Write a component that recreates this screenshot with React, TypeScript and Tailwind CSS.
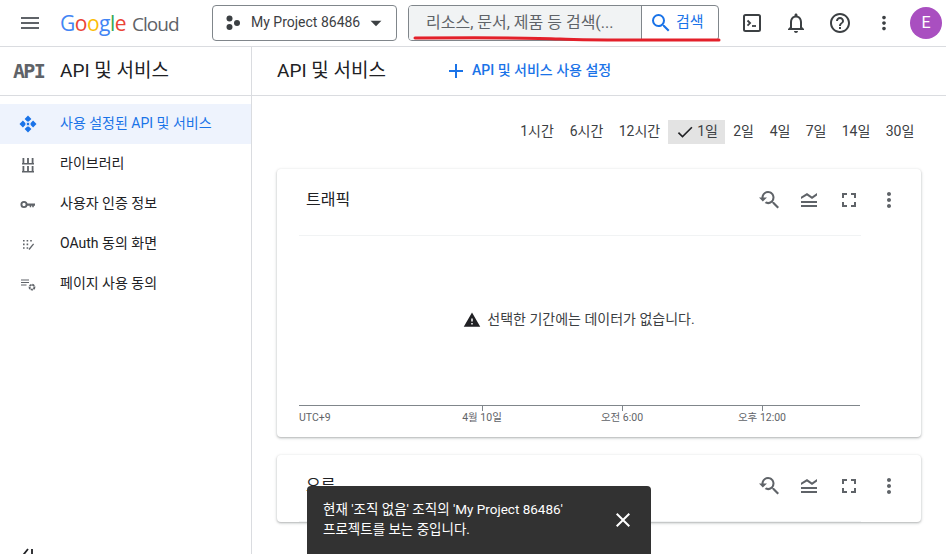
import React from 'react';
import {
  MdMenu,
  MdArrowDropDown,
  MdSearch,
  MdOutlineNotifications,
  MdHelpOutline,
  MdMoreVert,
  MdAdd,
  MdCheck,
  MdClose,
  MdWarning,
  MdFullscreen,
  MdLegendToggle,
  MdYoutubeSearchedFor,
} from 'react-icons/md';

const FONT = "font-['Roboto','Noto_Sans_CJK_KR',sans-serif]";

const ApiDiamonds = () => (
  <svg width="20" height="20" viewBox="0 0 20 20" fill="#1a73e8">
    <path d="M10 1.5l3.4 3.4-3.4 3.4-3.4-3.4zM10 11.7l3.4 3.4-3.4 3.4-3.4-3.4zM4.9 6.6l3.4 3.4-3.4 3.4L1.5 10zM15.1 6.6l3.4 3.4-3.4 3.4-3.4-3.4z" />
    <circle cx="10" cy="10" r="2.6" fill="#dbe6fb" />
    <circle cx="10" cy="10" r="1.2" />
  </svg>
);

const LibraryIcon = () => (
  <svg width="20" height="20" viewBox="0 0 20 20" fill="#5f6368">
    <path d="M4.5 4h1.8v5H4.5zM9.1 4h1.8v5H9.1zM13.7 4h1.8v5h-1.8zM4 9h12v1.4H4zM4.5 12h1.8v5H4.5zM9.1 12h1.8v5H9.1zM13.7 12h1.8v5h-1.8zM4 17h12v1.4H4z" />
  </svg>
);

const KeyIcon = () => (
  <svg width="20" height="20" viewBox="0 0 20 20" fill="#5f6368">
    <circle cx="6" cy="10.5" r="2.6" fill="none" stroke="#5f6368" strokeWidth="1.9" />
    <path d="M8.5 9.5H17v2.2h-1.2v1.6h-1.6v-1.6h-1v1.6h-1.5v-1.6H8.5z" />
  </svg>
);

const ConsentIcon = () => (
  <svg width="20" height="20" viewBox="0 0 20 20" fill="#5f6368">
    <path d="M5 6h1.6v1.6H5zM8.6 6h1.6v1.6H8.6zM12.2 6h1.6v1.6h-1.6zM5 9.6h1.6v1.6H5zM8.6 9.6h1.6v1.6H8.6zM5 13.2h1.6v1.6H5zM8.6 13.2h1.6v1.6H8.6z" />
    <path d="M11 15.5l4.6-5.6" stroke="#5f6368" strokeWidth="1.3" />
  </svg>
);

const PageUsageIcon = () => (
  <svg width="20" height="20" viewBox="0 0 20 20" fill="#5f6368">
    <path d="M3 5.5h8v1.1H3zM3 8h8v1.1H3zM3 10.5h5.5v1.1H3z" />
    <circle cx="14" cy="13.2" r="2.4" fill="none" stroke="#5f6368" strokeWidth="1.9" strokeDasharray="2 0.6" />
  </svg>
);

const TerminalIcon = () => (
  <svg width="20" height="20" viewBox="0 0 20 20" fill="none">
    <rect x="2" y="2" width="16" height="16" rx="1.5" stroke="#3c4043" strokeWidth="2" />
    <path d="M5.5 7.5l2.6 2.6-2.6 2.6" stroke="#3c4043" strokeWidth="1.8" />
    <path d="M10 13h4" stroke="#3c4043" strokeWidth="1.8" />
  </svg>
);

const ProjectIcon = () => (
  <svg width="16" height="16" viewBox="0 0 16 16" fill="#3c4043">
    <circle cx="4.5" cy="3.5" r="3" />
    <circle cx="4.5" cy="12" r="3" />
    <circle cx="12" cy="8" r="3" />
  </svg>
);

const sideItems = [
  { label: '사용 설정된 API 및 서비스', icon: <ApiDiamonds />, active: true },
  { label: '라이브러리', icon: <LibraryIcon />, active: false },
  { label: '사용자 인증 정보', icon: <KeyIcon />, active: false },
  { label: 'OAuth 동의 화면', icon: <ConsentIcon />, active: false },
  { label: '페이지 사용 동의', icon: <PageUsageIcon />, active: false },
];

const ranges = [
  { label: '1시간', w: 'w-[50px]' },
  { label: '6시간', w: 'w-[49px]' },
  { label: '12시간', w: 'w-[57px]' },
  { label: '1일', w: 'w-[57px]', active: true },
  { label: '2일', w: 'w-[37px]' },
  { label: '4일', w: 'w-[36px]' },
  { label: '7일', w: 'w-[36px]' },
  { label: '14일', w: 'w-[44px]' },
  { label: '30일', w: 'w-[44px]' },
];

const CardTools = () => (
  <div className="flex items-center text-[#5f6368]">
    <div className="w-10 flex justify-center"><MdYoutubeSearchedFor size={24} /></div>
    <div className="w-10 flex justify-center"><MdLegendToggle size={24} /></div>
    <div className="w-10 flex justify-center"><MdFullscreen size={24} /></div>
    <div className="w-10 flex justify-center"><MdMoreVert size={24} /></div>
  </div>
);

const Card = ({ title, children }: { title: string; children?: React.ReactNode }) => (
  <section className="w-[644px] bg-white rounded shadow-[0_1px_2px_rgba(60,64,67,0.3),0_1px_3px_1px_rgba(60,64,67,0.1)] shrink-0">
    <div className="h-[66px] flex items-center justify-between pl-[29px] pr-[12px] pb-[4px]">
      <h2 className="text-[16px] text-[#202124]">{title}</h2>
      <CardTools />
    </div>
    <div className="mx-[22px] w-[562px] border-t border-[#f1f3f4]" />
    {children}
  </section>
);

export default function App() {
  return (
    <div className={`w-[946px] h-[554px] overflow-hidden bg-white relative flex flex-col ${FONT} text-[#202124]`}>
      {/* Top bar */}
      <header className="h-[47px] shrink-0 flex items-center border-b border-[#dadce0]">
        <div className="w-[60px] flex justify-center"><MdMenu size={24} color="#5f6368" /></div>
        <div className="w-[152px] flex items-baseline font-['Open_Sans',sans-serif] leading-none whitespace-nowrap">
          <span className="text-[21px] tracking-[-0.5px]">
            <span className="text-[#4285f4]">G</span>
            <span className="text-[#ea4335]">o</span>
            <span className="text-[#fbbc04]">o</span>
            <span className="text-[#4285f4]">g</span>
            <span className="text-[#34a853]">l</span>
            <span className="text-[#ea4335]">e</span>
          </span>
          <span className="ml-[6px] text-[19px] tracking-[-1px] text-[#5f6368]">Cloud</span>
        </div>
        <div className="w-[185px] h-[36px] mb-[1px] border border-[#80868b] rounded flex items-center pl-[12px] pr-[7px]">
          <ProjectIcon />
          <span className="ml-[10px] text-[14px] text-[#3c4043] whitespace-nowrap">My Project 86486</span>
          <MdArrowDropDown size={26} className="ml-auto text-[#3c4043]" />
        </div>
        <div className="ml-[11px] w-[311px] h-[36px] mb-[1px] border border-[#80868b] rounded flex overflow-hidden">
          <div className="w-[233px] bg-[#f1f3f4] flex items-center pl-[17px] text-[16px] text-[#5f6368] whitespace-nowrap border-r border-[#80868b]">
            리소스, 문서, 제품 등 검색(...
          </div>
          <div className="flex-1 flex items-center pl-[7px] text-[#1a73e8] text-[15px] gap-[3px]">
            <MdSearch size={24} />
            <span>검색</span>
          </div>
        </div>
        <div className="ml-[13px] flex items-center text-[#3c4043]">
          <div className="w-10 flex justify-center"><TerminalIcon /></div>
          <div className="w-[47px] flex justify-center"><MdOutlineNotifications size={24} /></div>
          <div className="w-[41px] flex justify-center"><MdHelpOutline size={24} /></div>
          <div className="w-[48px] flex justify-center"><MdMoreVert size={22} /></div>
        </div>
        <div className="ml-[2px] w-[32px] h-[32px] rounded-full bg-[#a94fc0] text-white flex items-center justify-center text-[16px]">E</div>
      </header>

      <div className="flex flex-1 min-h-0">
        {/* Sidebar */}
        <aside className="w-[252px] shrink-0 border-r border-[#dadce0] flex flex-col relative">
          <div className="h-[49px] flex items-center pl-[13px] shrink-0 border-b border-[#dadce0]">
            <span className="w-[47px] text-[20px] font-bold text-[#5f6368] font-['DejaVu_Sans_Mono',monospace] tracking-[-1.7px]">API</span>
            <span className="text-[19px] text-[#202124]">API 및 서비스</span>
          </div>
          <nav className="mt-[8px]">
            {sideItems.map((item) => (
              <div
                key={item.label}
                className={`h-[40px] flex items-center pl-[18px] text-[14px] whitespace-nowrap ${
                  item.active ? 'bg-[#eef3fd] text-[#1a73e8]' : 'text-[#202124]'
                }`}
              >
                <span className="w-[42px]">{item.icon}</span>
                <span className="-mt-[1px]">{item.label}</span>
              </div>
            ))}
          </nav>
          <div className="mt-auto pl-[22px] h-[6px] overflow-visible text-[#202124]">
            <svg width="14" height="14" viewBox="0 0 14 14" fill="none" stroke="#202124" strokeWidth="1.8">
              <path d="M6 1L2 6l4 5M10 1v10" />
            </svg>
          </div>
        </aside>

        {/* Main */}
        <main className="flex-1 min-w-0 flex flex-col">
          <div className="h-[49px] shrink-0 flex items-center border-b border-[#dadce0] pl-[25px]">
            <h1 className="text-[19px] text-[#202124] w-[167px]">API 및 서비스</h1>
            <MdAdd size={24} color="#1a73e8" />
            <span className="ml-[4px] -mt-[1px] text-[14px] font-medium text-[#1a73e8]">API 및 서비스 사용 설정</span>
          </div>
          <div className="pl-[25px] flex flex-col gap-[18px]">
            <div className="h-[73px] shrink-0 flex items-start justify-end pr-[24px] w-[669px] pt-[24px] -mb-[18px]">
              {ranges.map((r) => (
                <div
                  key={r.label}
                  className={`h-[24px] ${r.w} flex items-center justify-center text-[14px] whitespace-nowrap text-[#3c4043] ${
                    r.active ? 'bg-[#e3e3e3]' : ''
                  }`}
                >
                  {r.active && <MdCheck size={20} className="mr-[2px] text-[#202124]" />}
                  <span className="-mt-[1px]">{r.label}</span>
                </div>
              ))}
            </div>
            <Card title="트래픽">
              <div className="h-[169px] flex items-center justify-center text-[14px] text-[#3c4043] pr-[40px] pb-[2px]">
                <MdWarning size={18} color="#202124" className="mr-[6px]" />
                선택한 기간에는 데이터가 없습니다.
              </div>
              <div className="mx-[22px] w-[561px] border-t border-[#80868b]" />
              <svg className="ml-[22px] block" width="561" height="5" viewBox="0 0 561 5" stroke="#80868b">
                <path d="M183.5 0v5M323.5 0v5M463.5 0v5" />
              </svg>
              <div className="ml-[22px] flex w-[561px] h-[26px] text-[10.5px] text-[#5f6368] leading-[14px]">
                <span className="w-[133px]">UTC+9</span>
                <span className="w-[100px] text-center">4월 10일</span>
                <span className="w-[40px]" />
                <span className="w-[100px] text-center">오전 6:00</span>
                <span className="w-[40px]" />
                <span className="w-[100px] text-center">오후 12:00</span>
              </div>
            </Card>
            <Card title="오류" />
          </div>
        </main>
      </div>

      {/* Snackbar */}
      <div className="absolute left-[307px] top-[486px] w-[344px] h-[68px] bg-[#323232] rounded-t text-white text-[13.5px] leading-[20px] flex items-center pl-[16px] pr-[16px]">
        <div className="flex-1 whitespace-nowrap pb-[2px]">
          현재 '조직 없음' 조직의 'My Project 86486'
          <br />
          프로젝트를 보는 중입니다.
        </div>
        <MdClose size={24} />
      </div>

      {/* Red hand-drawn underline */}
      <svg className="absolute left-[412px] top-[34px] pointer-events-none" width="310" height="10" viewBox="0 0 310 10" fill="none">
        <path d="M3 4C80 3.5 120 3.5 148 5S240 6 307 6" stroke="#e3202a" strokeWidth="3" strokeLinecap="round" />
      </svg>
    </div>
  );
}
